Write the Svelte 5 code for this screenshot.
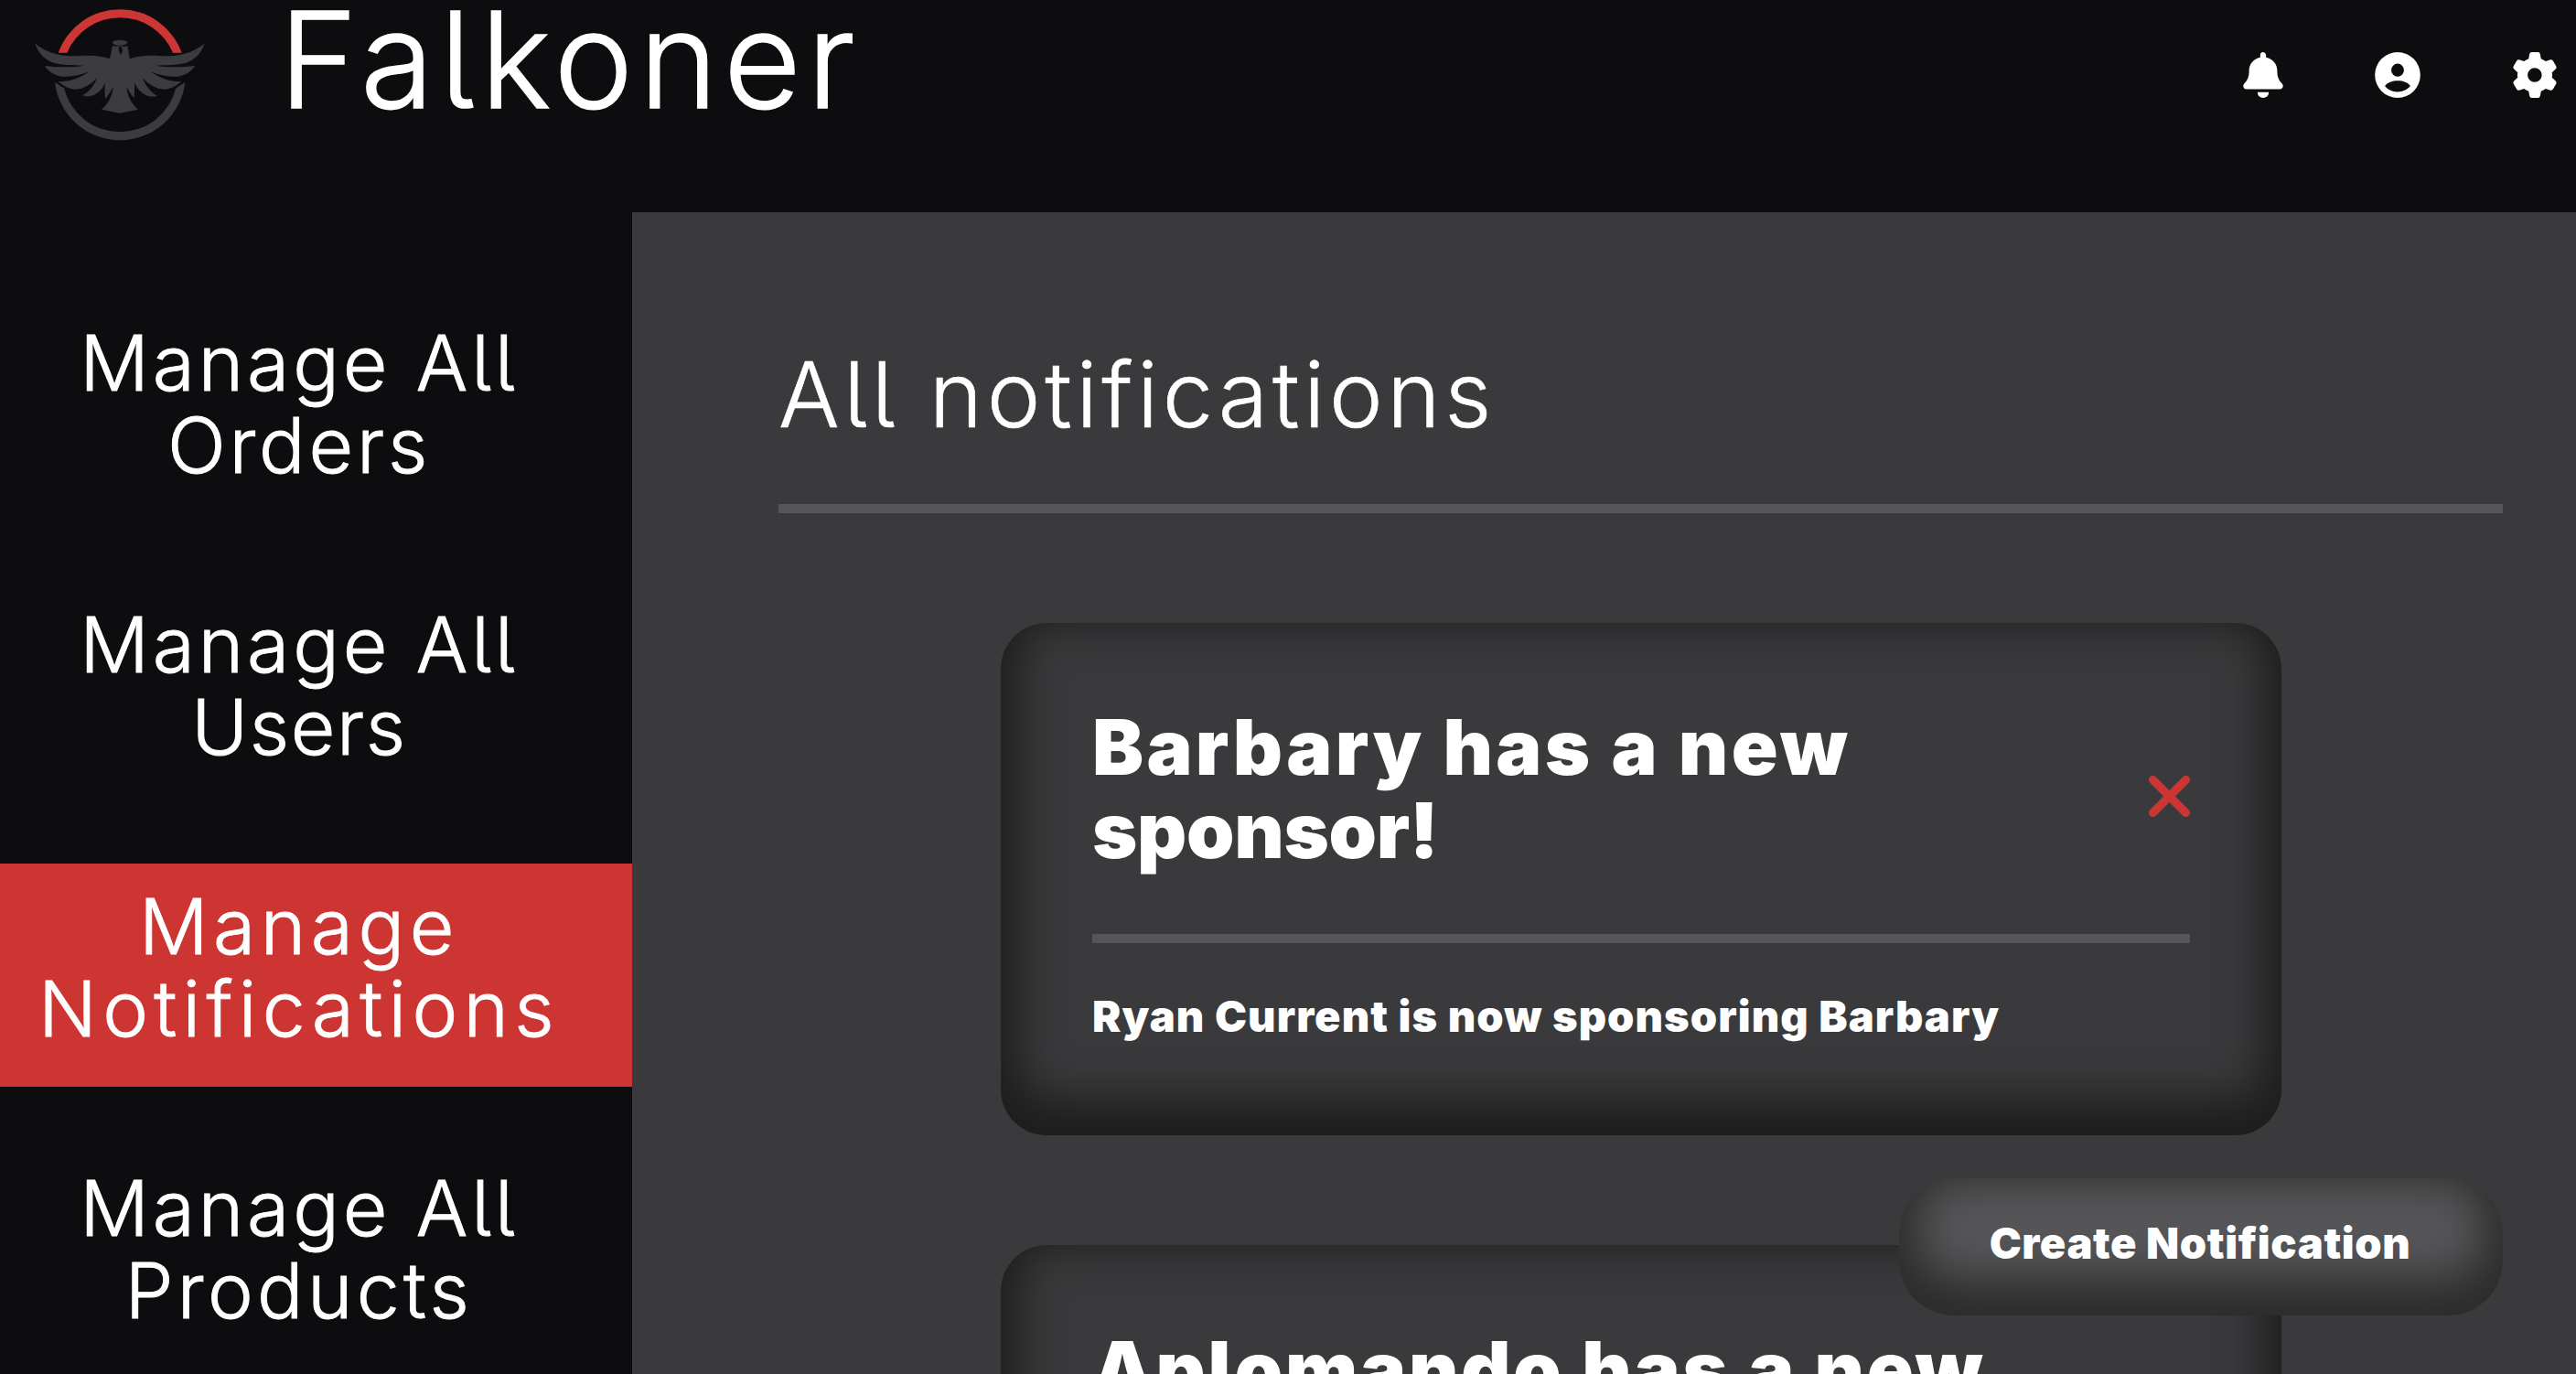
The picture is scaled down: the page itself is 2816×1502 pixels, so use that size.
<script>
  const menu = [
    { lines: [{ text: 'Manage All', tracking: 3.9 }, { text: 'Orders', tracking: 3.8 }] },
    { lines: [{ text: 'Manage All', tracking: 3.9 }, { text: 'Users', tracking: 1.6 }] },
    { lines: [{ text: 'Manage', tracking: 5.6 }, { text: 'Notifications', tracking: 6.3 }], active: true },
    { lines: [{ text: 'Manage All', tracking: 3.9 }, { text: 'Products', tracking: 4.3 }] }
  ];

  const notifications = [
    {
      title: [{ text: 'Barbary has a new', tracking: 3.3 }, { text: 'sponsor!', tracking: -0.3 }],
      body: 'Ryan Current is now sponsoring Barbary'
    },
    {
      title: [{ text: 'Aplomando has a new', tracking: 2.8 }, { text: 'sponsor!', tracking: -0.3 }],
      body: 'Ryan Current is now sponsoring Aplomando'
    }
  ];
</script>

<div class="app">
  <header>
    <svg class="logo" viewBox="0 0 900 540" aria-hidden="true">
      <path class="arc-top" d="M191.200 173A215 215 0 0 1 595.800 173L567 173A188 188 0 0 0 220 173Z" />
      <path class="arc-bottom" d="M180 270L211 290A188 188 0 0 0 576 290L607 270A215 215 0 0 1 180 270Z" />
      <g class="bird">
        <path d="M393 190L360 193C335 183 305 180 265 183C228 186 190 181 163 171C143 163 126 152 114 141C126 174 146 198 180 207C205 214 240 213 275 215C240 221 190 221 146 216C160 236 180 248 205 251C235 253 265 246 293 235C262 256 228 270 191 267C206 280 222 290 245 293C272 294 297 278 318 256C309 281 292 302 270 313C290 321 309 314 325 300C337 290 342 280 344 268C344 290 343 306 345 324C357 311 363 298 371 284C369 315 354 341 333 359L393 371Z" />
        <path d="M393 190L426 193C450 183 481 180 521 183C558 186 596 181 623 171C643 163 660 152 672 141C660 174 640 198 606 207C581 214 546 213 511 215C546 221 596 221 640 216C626 236 606 248 581 251C551 253 521 246 493 235C524 256 558 270 595 267C580 280 564 290 541 293C514 294 489 278 468 256C477 281 494 302 516 315C496 321 477 314 461 300C449 290 444 280 442 268C442 290 440 306 441 322C429 311 423 298 415 284C417 315 432 341 453 359L393 371Z" />
        <path d="M369 151L418 151L426 194L393 230L360 194Z" />
        <ellipse cx="393" cy="140" rx="24" ry="9" />
      </g>
      <path class="eye" d="M374 150Q393 156 413 150L409 154L398 154L402 164L397 181L389 166L391 154L377 153Z" />
    </svg>
    <h1>Falkoner</h1>
    <nav class="actions">
      <svg class="bell" viewBox="157 111 131 151" aria-hidden="true">
        <path d="M213 128V119Q214 111 222 111Q230 111 232 119V128C255 133 269 150 269 172C269 190 272 202 286 216Q291 225 284 231Q282 233 278 233H167Q163 233 160 231Q154 224 159 216C173 202 176 190 176 172C176 150 190 133 213 128ZM204 243H241C241 268 204 268 204 243Z" />
      </svg>
      <svg class="account" viewBox="588 111 150 151" aria-hidden="true">
        <path fill-rule="evenodd" d="M588 186.500A75 75.500 0 0 1 738 186.500A75 75.500 0 0 1 588 186.500ZM663 149A21 21.500 0 1 0 663 192A21 21.500 0 1 0 663 149ZM621 223C641 249 684 249 705 223C691 199 636 199 621 223Z" />
      </svg>
      <svg class="gear" viewBox="1042 111 143 151" aria-hidden="true">
        <path fill-rule="evenodd" d="M1102 111H1125Q1130 112 1131 117L1134 133Q1142 136 1149 141L1165 136Q1170 135 1173 139L1184 158Q1186 163 1182 167L1170 178Q1172 187 1170 195L1182 206Q1186 210 1184 215L1173 234Q1170 238 1165 237L1149 232Q1142 237 1134 240L1131 256Q1130 261 1125 262H1102Q1097 261 1096 256L1093 240Q1085 237 1078 232L1062 237Q1057 238 1054 234L1043 215Q1041 210 1045 206L1057 195Q1055 187 1057 178L1045 167Q1041 163 1043 158L1054 139Q1057 135 1062 136L1078 141Q1085 136 1093 133L1096 117Q1097 112 1102 111ZM1113 163A23.500 23.500 0 1 0 1113 210A23.500 23.500 0 1 0 1113 163Z" />
      </svg>
    </nav>
  </header>

  <div class="body">
    <aside>
      {#each menu as item}
        <a class="item" class:active={item.active} href="#top">
          {#each item.lines as line}
            <span style="letter-spacing: {line.tracking}px">{line.text}</span>
          {/each}
        </a>
      {/each}
    </aside>

    <main>
      <h2>All notifications</h2>
      <div class="list">
        {#each notifications as note}
          <article>
            <div class="top">
              <h3>
                {#each note.title as line}
                  <span style="letter-spacing: {line.tracking}px">{line.text}</span>
                {/each}
              </h3>
              <svg class="close" viewBox="0 0 45 45" aria-hidden="true"><path d="M4.500 4.500L40.500 40.500M40.500 4.500L4.500 40.500" /></svg>
            </div>
            <p>{note.body}</p>
          </article>
        {/each}
      </div>
    </main>
  </div>

  <button>Create Notification</button>
</div>

<style>
  :global(body) {
    overflow: hidden;
  }
  .app {
    position: relative;
    display: flex;
    flex-direction: column;
    width: 2816px;
    height: 1502px;
    overflow: hidden;
    background: #0d0d0f;
    color: #fff;
    font-family: Inter, 'Open Sans', sans-serif;
    font-weight: 300;
    font-feature-settings: 'cv05';
    white-space: nowrap;
  }
  h1, h2, h3, p {
    margin: 0;
    font-weight: inherit;
  }
  header {
    display: flex;
    align-items: flex-start;
    height: 232px;
    flex: none;
  }
  .logo {
    width: 300px;
    height: 180px;
    margin-right: 5px;
  }
  .arc-top {
    fill: #cd3634;
  }
  .arc-bottom,
  .bird {
    fill: #3c3c3e;
  }
  .eye {
    fill: #0d0d0f;
  }
  h1 {
    font-size: 146px;
    line-height: 130px;
    letter-spacing: 6.5px;
    -webkit-text-stroke: 1.500px #fff;
  }
  .actions {
    display: flex;
    margin-left: auto;
    padding: 57px 21px 0 0;
  }
  .actions svg {
    height: 50px;
    fill: #fff;
  }
  .bell {
    width: 44px;
    margin-right: 100px;
  }
  .account {
    width: 50px;
    margin-right: 101px;
  }
  .gear {
    width: 48px;
  }
  .body {
    display: flex;
    flex: 1;
    min-height: 0;
  }
  aside {
    display: flex;
    flex-direction: column;
    gap: 64px;
    width: 691px;
    flex: none;
    padding-top: 96px;
    box-sizing: border-box;
  }
  .item {
    display: flex;
    flex: none;
    flex-direction: column;
    align-items: center;
    box-sizing: border-box;
    height: 244px;
    padding: 24px 37px 0 0;
    color: #fff;
    font-size: 84px;
    line-height: 89.500px;
    text-decoration: none;
    -webkit-text-stroke: 1px #fff;
  }
  .active {
    background: #cd3533;
  }
  main {
    flex: 1;
    box-sizing: border-box;
    padding: 144px 80px 0 160px;
    background: #3a3a3c;
    overflow: hidden;
  }
  h2 {
    padding-bottom: 65px;
    border-bottom: 10px solid #565658;
    font-size: 99px;
    line-height: 110px;
    letter-spacing: 4.7px;
    -webkit-text-stroke: 0.6px #fff;
  }
  .list {
    display: flex;
    flex-direction: column;
    align-items: center;
    gap: 120px;
    padding-top: 120px;
  }
  article {
    box-sizing: border-box;
    width: 1400px;
    height: 560px;
    flex: none;
    padding: 91px 100px 0;
    border-radius: 50px;
    box-shadow: inset 0 -20px 50px 20px rgba(0, 0, 0, 0.5);
    margin-left: 1px;
    font-weight: 900;
  }
  .top {
    display: flex;
    align-items: center;
    justify-content: space-between;
    padding-bottom: 68px;
    border-bottom: 10px solid #565658;
  }
  h3 {
    display: flex;
    flex-direction: column;
    font-size: 84px;
    line-height: 90.500px;
  }
  .close {
    width: 45px;
    height: 45px;
    margin-top: 15px;
    fill: none;
    stroke: #cd3533;
    stroke-width: 9;
    stroke-linecap: round;
  }
  p {
    margin-top: 51px;
    font-size: 47px;
    line-height: 57px;
    letter-spacing: 1.07px;
  }
  button {
    position: absolute;
    right: 80px;
    bottom: 64px;
    width: 660px;
    height: 150px;
    padding: 0 2px 9px 0;
    border: 0;
    border-radius: 60px;
    background: #565658;
    box-shadow: inset 0 -20px 50px 20px rgba(0, 0, 0, 0.5);
    color: #fff;
    font: 900 47px/57px Inter, 'Open Sans', sans-serif;
    font-feature-settings: 'cv05';
    letter-spacing: 0.6px;
  }
</style>
